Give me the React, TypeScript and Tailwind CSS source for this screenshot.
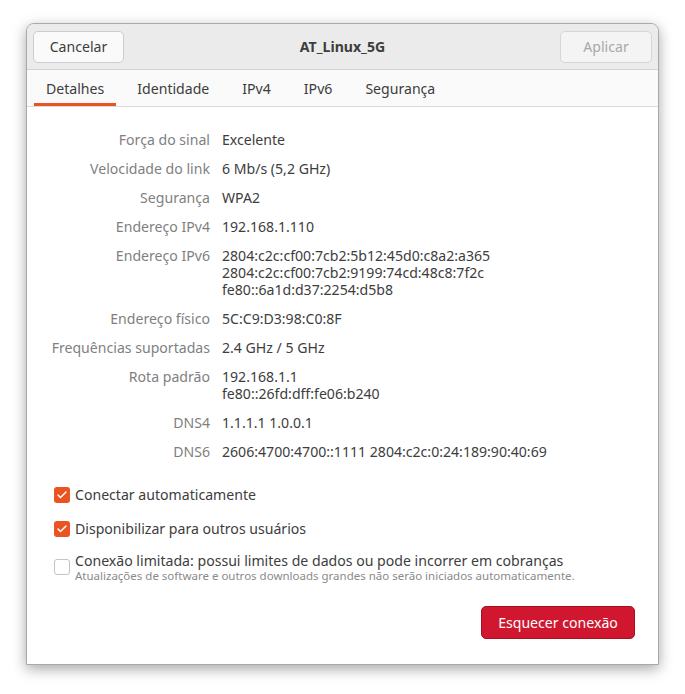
import { Check } from 'lucide-react';

const rows: { label: string; value: string[] }[] = [
  { label: 'Força do sinal', value: ['Excelente'] },
  { label: 'Velocidade do link', value: ['6 Mb/s (5,2 GHz)'] },
  { label: 'Segurança', value: ['WPA2'] },
  { label: 'Endereço IPv4', value: ['192.168.1.110'] },
  {
    label: 'Endereço IPv6',
    value: ['2804:c2c:cf00:7cb2:5b12:45d0:c8a2:a365', '2804:c2c:cf00:7cb2:9199:74cd:48c8:7f2c', 'fe80::6a1d:d37:2254:d5b8'],
  },
  { label: 'Endereço físico', value: ['5C:C9:D3:98:C0:8F'] },
  { label: 'Frequências suportadas', value: ['2.4 GHz / 5 GHz'] },
  { label: 'Rota padrão', value: ['192.168.1.1', 'fe80::26fd:dff:fe06:b240'] },
  { label: 'DNS4', value: ['1.1.1.1 1.0.0.1'] },
  { label: 'DNS6', value: ['2606:4700:4700::1111 2804:c2c:0:24:189:90:40:69'] },
];

const tabs = ['Detalhes', 'Identidade', 'IPv4', 'IPv6', 'Segurança'];

function CheckBox({ checked }: { checked: boolean }) {
  if (checked) {
    return (
      <span className="w-[16px] h-[16px] rounded-[3px] bg-[#e95420] flex items-center justify-center shrink-0">
        <Check className="w-[12px] h-[12px] text-white" strokeWidth={3} />
      </span>
    );
  }
  return <span className="w-[16px] h-[16px] rounded-[3px] border border-[#c4c4c4] bg-white shrink-0" />;
}

export default function App() {
  return (
    <div className="w-[685px] h-[694px] bg-white pt-[23px] pl-[26px] text-[#3d3d3d] text-[14.1px] leading-[17px]" style={{ fontFamily: '"Noto Sans", sans-serif' }}>
      <div className="w-[633px] h-[642px] border border-[#a9a9a9] rounded-t-[8px] bg-white shadow-[0_4px_14px_rgba(0,0,0,0.35)] flex flex-col overflow-hidden">
        {/* header bar */}
        <div className="h-[46px] bg-[#ebebeb] border-b border-[#d3d3d3] flex items-center justify-between px-[6px] relative">
          <button className="w-[91px] h-[32px] rounded-[5px] border border-[#cdcdcd] bg-[#fafafa] text-[#3d3d3d]">Cancelar</button>
          <div className="absolute left-0 right-0 text-center font-bold pointer-events-none">AT_Linux_5G</div>
          <button className="w-[92px] h-[32px] rounded-[5px] border border-[#d6d6d6] bg-[#f4f4f4] text-[#a8a8a8]">Aplicar</button>
        </div>

        {/* tabs */}
        <div className="h-[37px] bg-[#fafafa] border-b border-[#dadada] flex items-stretch pl-[7px] gap-[9px]">
          {tabs.map((t, i) => (
            <div key={t} className="relative px-[12px] flex items-center">
              {t}
              {i === 0 && <span className="absolute left-0 right-0 bottom-0 h-[3px] bg-[#e95420]" />}
            </div>
          ))}
        </div>

        {/* details */}
        <div className="pt-[24px] grid grid-cols-[183px_1fr] gap-x-[12px] gap-y-[12px]">
          {rows.map((r) => (
            <div key={r.label} className="contents">
              <div className="text-right text-[#7f7f7f]">{r.label}</div>
              <div>
                {r.value.map((v) => (
                  <div key={v}>{v}</div>
                ))}
              </div>
            </div>
          ))}
        </div>

        {/* options */}
        <div className="mt-[26px] pl-[27px] flex flex-col">
          <label className="flex items-center gap-[5px]">
            <CheckBox checked />
            <span>Conectar automaticamente</span>
          </label>
          <label className="mt-[17px] flex items-center gap-[5px]">
            <CheckBox checked />
            <span>Disponibilizar para outros usuários</span>
          </label>
          <label className="mt-[15px] flex items-center gap-[5px]">
            <CheckBox checked={false} />
            <span className="flex flex-col">
              <span>Conexão limitada: possui limites de dados ou pode incorrer em cobranças</span>
              <span className="text-[11.5px] leading-[13px] text-[#8a8a8a]">Atualizações de software e outros downloads grandes não serão iniciados automaticamente.</span>
            </span>
          </label>
        </div>

        <div className="mt-[24px] pr-[23px] flex justify-end">
          <button className="w-[154px] h-[33px] rounded-[5px] bg-[#d0172f] border border-[#a8101f] text-white">Esquecer conexão</button>
        </div>
      </div>
    </div>
  );
}
